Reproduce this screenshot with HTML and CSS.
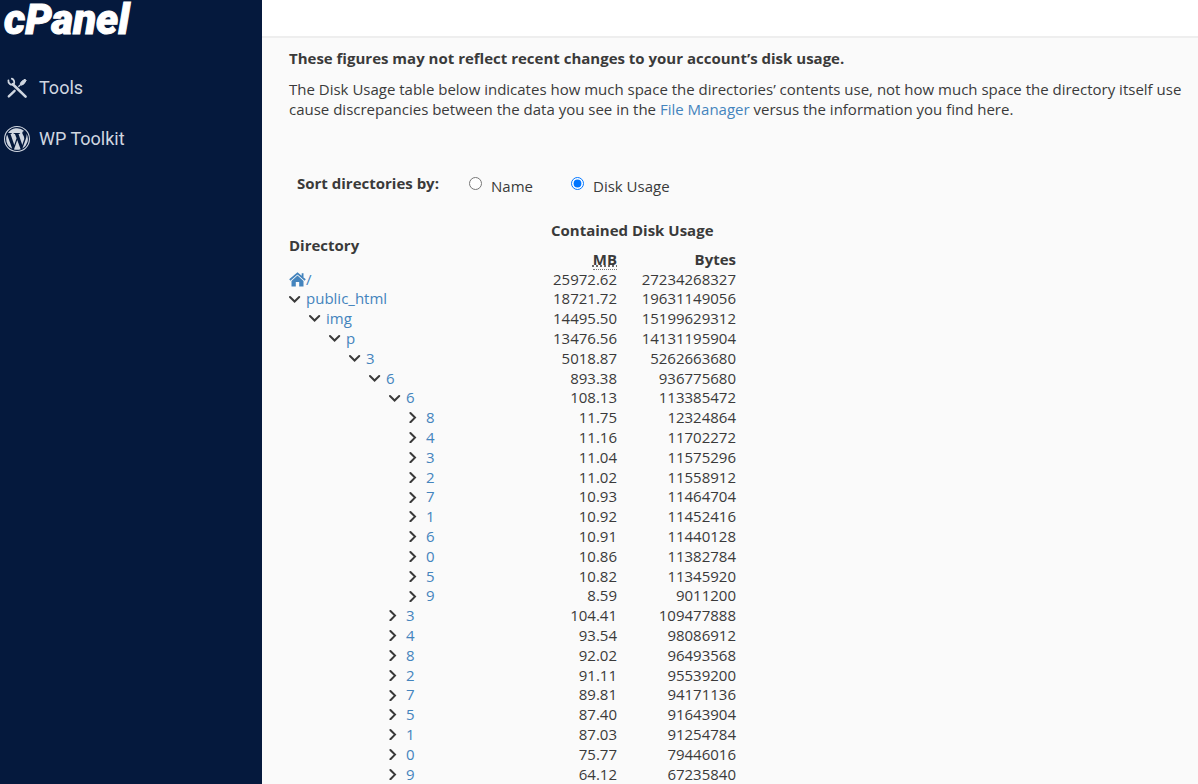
FILE: index.html
```html
<!DOCTYPE html>
<html lang="en">
<head>
<meta charset="utf-8">
<meta name="viewport" content="width=device-width, initial-scale=1">
<title>cPanel - Disk Usage</title>
<link rel="stylesheet" href="styles.css">
</head>
<body>
<svg class="sprite" aria-hidden="true">
  <symbol id="down" viewBox="0 0 12 12"><path d="M1 4 5.600 8.500l4.600-4.500" fill="none" stroke="currentColor" stroke-width="2" stroke-linecap="round"/></symbol>
  <symbol id="right" viewBox="0 0 12 12"><path d="M3.400 2 8 6.600l-4.600 4.600" fill="none" stroke="currentColor" stroke-width="2" stroke-linecap="round"/></symbol>
</svg>
<aside class="sidebar">
  <a class="logo" href="#">cPanel</a>
  <nav class="menu">
    <a class="menu-item" href="#">
      <svg class="menu-icon" viewBox="0 0 26 26" aria-hidden="true">
        <path d="M8.8 9.2 21.6 21.6" fill="none" stroke="currentColor" stroke-width="2.6" stroke-linecap="round"/>
        <path d="M4.400 5.500A3.600 3.600 0 0 0 9.600 9.200 3.600 3.600 0 0 0 7.800 3.700" fill="none" stroke="currentColor" stroke-width="1.800" stroke-linecap="round"/>
        <path d="M4.8 21.4 10.6 15.8" fill="none" stroke="currentColor" stroke-width="2.4" stroke-linecap="round"/>
        <path d="M14.4 11.8 17 9.2" stroke="currentColor" stroke-width="1.3"/>
        <path d="M16.2 8.8Q16.6 6.4 21 4.2L22.2 5.4Q20 9.8 17.6 10.2Z" fill="currentColor" stroke="currentColor" stroke-linejoin="round"/>
      </svg>
      <span>Tools</span>
    </a>
    <a class="menu-item" href="#">
      <svg class="menu-icon" viewBox="0 0 24 24" aria-hidden="true">
        <circle cx="12" cy="12" r="11.5" fill="none" stroke="currentColor" stroke-width="1"/>
        <path fill="currentColor" d="M2 12a10 10 0 0 0 5.600 9L2.900 7.900A10 10 0 0 0 2 12zm16.700-.5c0-1.200-.4-2.100-.8-2.800-.5-.8-1-1.500-1-2.400s.7-1.800 1.700-1.800h.1A10 10 0 0 0 3.700 6.500h.6c1 0 2.700-.1 2.700-.1.600 0 .6.700.1.800 0 0-.5.1-1.100.1l3.500 10.300 2.100-6.200-1.500-4.100-1-.1c-.5 0-.5-.8.1-.8 0 0 1.600.1 2.600.1s2.700-.1 2.700-.1c.500 0 .6.700.1.800l-1.200.1 3.500 10.200 1-3.200c.5-1.300.8-2.200.8-2.800zm-6.500 1.400-3 8.700a10 10 0 0 0 6.200-.2l-.1-.1zm8.600-5.700c.2 2-.2 3.300-.7 4.700l-3.100 8.800A10 10 0 0 0 20.800 7.200z"/>
      </svg>
      <span>WP Toolkit</span>
    </a>
  </nav>
</aside>
<div class="page">
  <header class="topbar"></header>
  <main class="content">
    <p class="notice">These figures may not reflect recent changes to your account’s disk usage.</p>
    <p class="intro">The Disk Usage table below indicates how much space the directories’ contents use, not how much space the directory itself use<br>cause discrepancies between the data you see in the <a href="#">File Manager</a> versus the information you find here.</p>
    <form class="sort" role="radiogroup" aria-labelledby="sort-title">
      <strong id="sort-title">Sort directories by:</strong>
      <label class="option name"><input type="radio" name="sort"><span>Name</span></label>
      <label class="option"><input type="radio" name="sort" checked><span>Disk Usage</span></label>
    </form>
    <table class="usage">
      <thead>
        <tr class="titles"><th class="directory" rowspan="2" scope="col">Directory</th><th class="group" colspan="2" scope="colgroup">Contained Disk Usage</th></tr>
        <tr><th class="mb" scope="col"><abbr title="Megabytes">MB</abbr></th><th class="bytes" scope="col">Bytes</th></tr>
      </thead>
      <tbody id="rows"></tbody>
    </table>
  </main>
</div>
<script src="tree.js"></script>
</body>
</html>
```
FILE: styles.css
```css
* { box-sizing: border-box; }
body {
  margin: 0;
  height: 100vh;
  display: flex;
  overflow: hidden;
  background: #fafafa;
  color: #3a3a3a;
  font: 15px/20px "Open Sans", sans-serif;
}
a { color: #4484bd; text-decoration: none; }
.sprite { display: none; }
.sidebar { flex: 0 0 262px; background: #05193d; }
.logo {
  display: block;
  padding-left: 4px;
  color: #fff;
  font: italic 900 42px/40px Roboto, sans-serif;
  -webkit-text-stroke: 1px #fff;
}
.menu { display: flex; flex-direction: column; padding: 22px 4px; }
.menu-item {
  display: flex;
  align-items: center;
  gap: 9px;
  height: 51px;
  color: #d0d6e0;
  font: 18px/24px Roboto, sans-serif;
}
.menu-icon { width: 26px; height: 26px; }
.page { flex: 1; min-width: 0; overflow: hidden; }
.topbar { height: 38px; background: #fff; border-bottom: 2px solid #eee; }
.content { padding: 10px 0 0 27px; }
p { margin: 0; }
.notice { font-weight: 700; }
.intro { margin-top: 11px; white-space: nowrap; }
.sort { display: flex; padding: 54px 8px 0; }
.sort strong { width: 172px; }
.option { display: flex; gap: 9px; }
.option.name { width: 102px; }
.option span { padding-top: 3px; }
.option input { width: 13px; height: 13px; margin: 4px 0 0; }
.usage { margin-top: 24px; border-collapse: collapse; }
.usage th, .usage td { padding: 0; text-align: right; }
.usage .titles { height: 29px; }
.usage .directory { width: 262px; vertical-align: middle; }
.usage .directory, .usage .group, .usage .name { text-align: left; }
.usage .mb { width: 66px; }
.usage .bytes { width: 119px; }
.usage .group { vertical-align: top; }
.usage tbody tr:nth-child(5n + 2) { line-height: 19px; }
abbr { border-bottom: 1px dotted #777; text-decoration: underline dotted; }
.entry { display: flex; align-items: center; }
.entry .step { width: 20px; }
.entry .arrow { width: 12px; height: 12px; margin-right: 5px; }
.entry .arrow.closed { margin-left: -2px; margin-right: 7px; }
.home { width: 17px; height: 15px; }
```
FILE: tree.js
```js
// depth, name, megabytes, bytes, open
const rows = [
  [0, "public_html", "18721.72", "19631149056", true],
  [1, "img", "14495.50", "15199629312", true],
  [2, "p", "13476.56", "14131195904", true],
  [3, "3", "5018.87", "5262663680", true],
  [4, "6", "893.38", "936775680", true],
  [5, "6", "108.13", "113385472", true],
  [6, "8", "11.75", "12324864"],
  [6, "4", "11.16", "11702272"],
  [6, "3", "11.04", "11575296"],
  [6, "2", "11.02", "11558912"],
  [6, "7", "10.93", "11464704"],
  [6, "1", "10.92", "11452416"],
  [6, "6", "10.91", "11440128"],
  [6, "0", "10.86", "11382784"],
  [6, "5", "10.82", "11345920"],
  [6, "9", "8.59", "9011200"],
  [5, "3", "104.41", "109477888"],
  [5, "4", "93.54", "98086912"],
  [5, "8", "92.02", "96493568"],
  [5, "2", "91.11", "95539200"],
  [5, "7", "89.81", "94171136"],
  [5, "5", "87.40", "91643904"],
  [5, "1", "87.03", "91254784"],
  [5, "0", "75.77", "79446016"],
  [5, "9", "64.12", "67235840"]
];
const home = `<tr><td class="name"><a class="entry" href="#" aria-label="Home directory"><svg class="home" viewBox="0 0 17 15"><path fill="currentColor" d="M8.500 3.600 14.500 9V14.500H10.200V10H6.800V14.500H2.500V9Z"/><path d="M.8 8 8.500 1.400 16.200 8M13.600 1.200V5" fill="none" stroke="currentColor" stroke-width="1.800"/></svg>/</a></td><td>25972.62</td><td>27234268327</td></tr>`;
document.getElementById("rows").innerHTML = home + rows.map(([depth, name, mb, bytes, open]) =>
  `<tr><td class="name"><div class="entry">${'<span class="step"></span>'.repeat(depth)}<svg class="arrow ${open ? "" : "closed"}" aria-hidden="true"><use href="#${open ? "down" : "right"}"/></svg><a href="#">${name}</a></div></td><td>${mb}</td><td>${bytes}</td></tr>`
).join("");
```
